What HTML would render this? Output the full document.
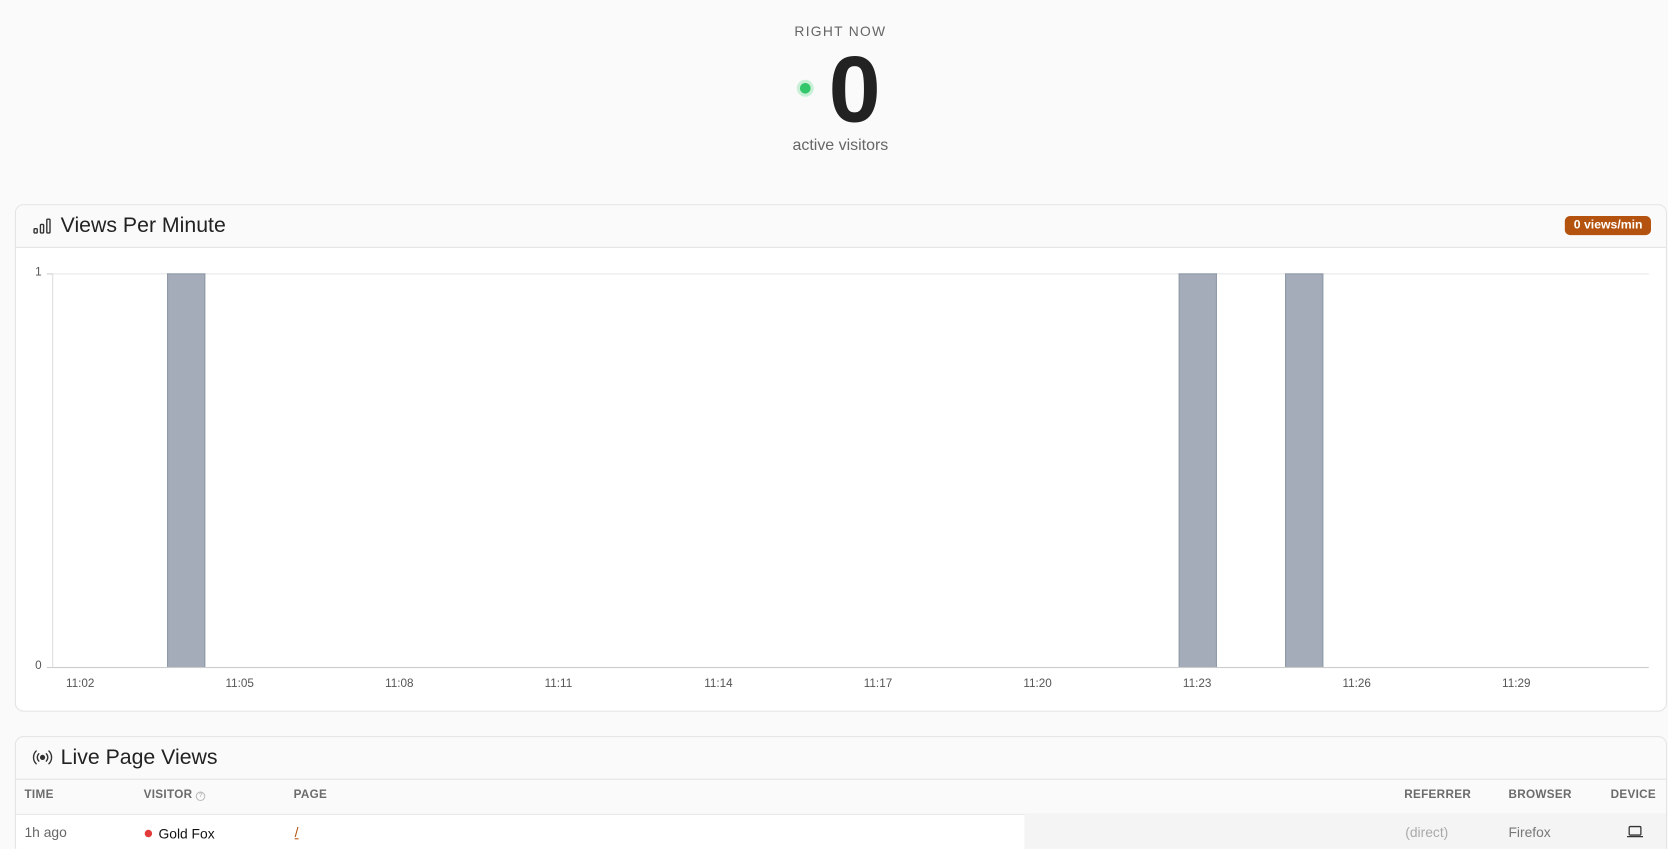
<!DOCTYPE html>
<html><head><meta charset="utf-8"><style>
html,body{margin:0;padding:0;background:#fafafa;overflow:hidden;width:1668px;height:849px}
#w{position:absolute;left:0;top:0;width:1568px;height:798px;overflow:hidden;transform:scale(1.06378);transform-origin:0 0;font-family:"Liberation Sans",sans-serif;color:#222}
.a{position:absolute;white-space:nowrap}
.card{position:absolute;left:14px;width:1551px;border:1px solid #e3e3e3;border-radius:8px;background:#fff;overflow:hidden}
.hd{height:39px;background:#fafafa;border-bottom:1px solid #e3e3e3;position:relative}
.ttl{position:absolute;left:42px;top:8px;font-size:20px;color:#222}
.th{font-size:11px;font-weight:bold;color:#6b6b6b;letter-spacing:.3px;top:741px}
.xl{font-size:11px;color:#555;top:637px}
</style></head><body><div id="w">
<div class="a" style="left:0;width:1580px;text-align:center;top:22px;font-size:13px;letter-spacing:1.2px;color:#666">RIGHT NOW</div>
<div class="a" style="left:749px;top:75px;width:16px;height:16px;border-radius:50%;background:#c9f0d6"></div>
<div class="a" style="left:752px;top:78px;width:10px;height:10px;border-radius:50%;background:#34c66a"></div>
<div class="a" style="left:779px;top:36px;font-size:88px;font-weight:bold;color:#222;line-height:96px">0</div>
<div class="a" style="left:0;width:1580px;text-align:center;top:128px;font-size:15px;color:#666">active visitors</div>

<div class="card" style="top:192px;height:475px">
 <div class="hd">
  <svg class="a" style="left:16px;top:12px" width="18" height="16" viewBox="0 0 18 16" fill="none" stroke="#333" stroke-width="1.3"><rect x="1" y="10" width="3" height="4" rx=".8"/><rect x="7" y="6" width="3" height="8" rx=".8"/><rect x="13" y="1" width="3" height="13" rx=".8"/></svg>
  <div class="ttl">Views Per Minute</div>
  <div class="a" style="right:14px;top:10px;height:18px;line-height:18px;padding:0 8px;background:#b4530f;color:#fff;font-size:11.5px;font-weight:bold;border-radius:5px">0 views/min</div>
 </div>
</div>
<div class="a" style="left:49px;top:257px;width:1501px;height:1px;background:#e6e6e6"></div>
<div class="a" style="left:49px;top:257px;width:1px;height:370px;background:#ddd"></div>
<div class="a" style="left:44px;top:627px;width:1506px;height:1px;background:#ccc"></div>
<div class="a" style="left:44px;top:257px;width:5px;height:1px;background:#ccc"></div>
<div class="a" style="left:33px;top:250px;font-size:11px;color:#555">1</div>
<div class="a" style="left:33px;top:620px;font-size:11px;color:#555">0</div>
<div class="a" style="left:157px;top:257px;width:34px;height:369px;background:#a3acb8;border:1px solid #8f99a7;border-bottom:none"></div>
<div class="a" style="left:1108px;top:257px;width:34px;height:369px;background:#a3acb8;border:1px solid #8f99a7;border-bottom:none"></div>
<div class="a" style="left:1208px;top:257px;width:34px;height:369px;background:#a3acb8;border:1px solid #8f99a7;border-bottom:none"></div>
<div class="a xl" style="left:62px">11:02</div><div class="a xl" style="left:212px">11:05</div><div class="a xl" style="left:362px">11:08</div><div class="a xl" style="left:512px">11:11</div><div class="a xl" style="left:662px">11:14</div><div class="a xl" style="left:812px">11:17</div><div class="a xl" style="left:962px">11:20</div><div class="a xl" style="left:1112px">11:23</div><div class="a xl" style="left:1262px">11:26</div><div class="a xl" style="left:1412px">11:29</div>

<div class="card" style="top:692px;height:110px">
 <div class="hd">
  <svg class="a" style="left:15px;top:11px" width="20" height="16" viewBox="0 0 20 16" fill="none" stroke="#333" stroke-width="1.3" stroke-linecap="round"><circle cx="10" cy="8" r="1.8" fill="#333"/><path d="M6.5 4.5a5 5 0 0 0 0 7M13.5 4.5a5 5 0 0 1 0 7M4 2a8.5 8.5 0 0 0 0 12M16 2a8.5 8.5 0 0 1 0 12"/></svg>
  <div class="ttl">Live Page Views</div>
 </div>
 <div style="height:32px;background:#fafafa;border-bottom:1px solid #e6e6e6"></div>
 <div class="a" style="left:948px;top:72px;width:610px;height:40px;background:#f4f4f4"></div>
</div>
<div class="a th" style="left:23px">TIME</div>
<div class="a th" style="left:135px">VISITOR <span style="display:inline-block;width:7px;height:7px;border:1px solid #bbb;border-radius:50%;font-size:6px;line-height:7px;text-align:center;color:#bbb;vertical-align:1px">?</span></div>
<div class="a th" style="left:276px">PAGE</div>
<div class="a th" style="left:1320px">REFERRER</div>
<div class="a th" style="left:1418px">BROWSER</div>
<div class="a th" style="left:1514px">DEVICE</div>
<div class="a" style="left:23px;top:775px;font-size:13px;color:#666">1h ago</div>
<div class="a" style="left:136px;top:780px;width:7px;height:7px;border-radius:50%;background:#e23b3b"></div>
<div class="a" style="left:149px;top:776px;font-size:13px;color:#111">Gold Fox</div>
<div class="a" style="left:277px;top:775px;font-size:13px;color:#b4530f;text-decoration:underline">/</div>
<div class="a" style="left:1321px;top:775px;font-size:13px;color:#aaa">(direct)</div>
<div class="a" style="left:1418px;top:775px;font-size:13px;color:#777">Firefox</div>
<svg class="a" style="left:1529px;top:776px" width="16" height="12" viewBox="0 0 16 12" fill="none" stroke="#333" stroke-width="1.2"><rect x="2.5" y="1" width="11" height="8" rx="1"/><path d="M0.5 10.5h15"/></svg>
</div></body></html>
